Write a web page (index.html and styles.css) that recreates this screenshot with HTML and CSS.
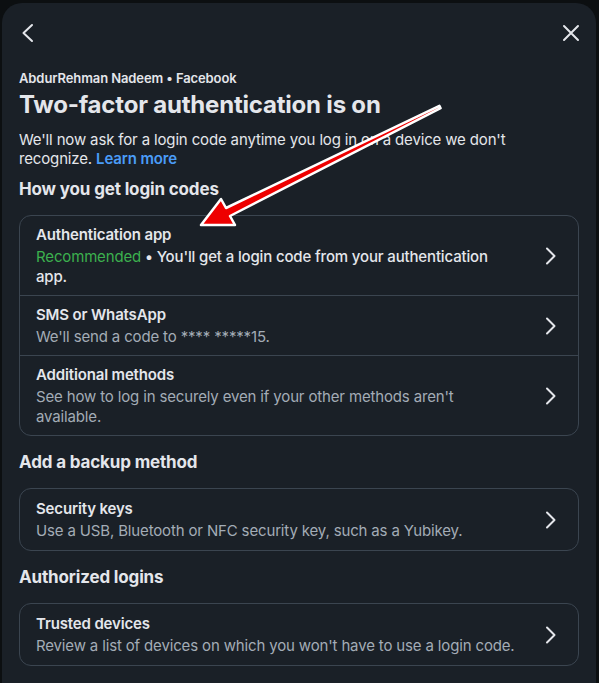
FILE: index.html
```html
<!DOCTYPE html>
<html>
<head>
<meta charset="utf-8">
<link rel="stylesheet" href="styles.css">
</head>
<body>
<div class="dialog">
  <div class="topbar">
    <svg class="icon" width="20" height="20" viewBox="0 0 20 20"><path d="M13 2 L4.5 10 L13 18" fill="none" stroke="#e4e6eb" stroke-width="2" stroke-linecap="round" stroke-linejoin="round"/></svg>
    <svg class="icon" width="20" height="20" viewBox="0 0 20 20"><path d="M3 3 L17 17 M17 3 L3 17" fill="none" stroke="#e4e6eb" stroke-width="2" stroke-linecap="round"/></svg>
  </div>
  <div class="account">AbdurRehman Nadeem • Facebook</div>
  <h1 class="title">Two-factor authentication is on</h1>
  <p class="intro">We'll now ask for a login code anytime you log in on a device we don't recognize. <span class="link">Learn more</span></p>

  <h2 class="section">How you get login codes</h2>
  <div class="card">
    <div class="row">
      <div class="row-text">
        <div class="row-title">Authentication app</div>
        <div class="row-sub strong"><span class="green">Recommended</span> • You'll get a login code from your authentication app.</div>
      </div>
      <svg class="chev" width="12" height="18" viewBox="0 0 12 18"><path d="M2 1.5 L9.5 9 L2 16.5" fill="none" stroke="#e4e6eb" stroke-width="2" stroke-linecap="round" stroke-linejoin="round"/></svg>
    </div>
    <div class="row">
      <div class="row-text">
        <div class="row-title">SMS or WhatsApp</div>
        <div class="row-sub">We'll send a code to **** *****15.</div>
      </div>
      <svg class="chev" width="12" height="18" viewBox="0 0 12 18"><path d="M2 1.5 L9.5 9 L2 16.5" fill="none" stroke="#e4e6eb" stroke-width="2" stroke-linecap="round" stroke-linejoin="round"/></svg>
    </div>
    <div class="row">
      <div class="row-text">
        <div class="row-title">Additional methods</div>
        <div class="row-sub">See how to log in securely even if your other methods aren't available.</div>
      </div>
      <svg class="chev" width="12" height="18" viewBox="0 0 12 18"><path d="M2 1.5 L9.5 9 L2 16.5" fill="none" stroke="#e4e6eb" stroke-width="2" stroke-linecap="round" stroke-linejoin="round"/></svg>
    </div>
  </div>

  <h2 class="section">Add a backup method</h2>
  <div class="card">
    <div class="row">
      <div class="row-text">
        <div class="row-title">Security keys</div>
        <div class="row-sub">Use a USB, Bluetooth or NFC security key, such as a Yubikey.</div>
      </div>
      <svg class="chev" width="12" height="18" viewBox="0 0 12 18"><path d="M2 1.5 L9.5 9 L2 16.5" fill="none" stroke="#e4e6eb" stroke-width="2" stroke-linecap="round" stroke-linejoin="round"/></svg>
    </div>
  </div>

  <h2 class="section">Authorized logins</h2>
  <div class="card">
    <div class="row">
      <div class="row-text">
        <div class="row-title">Trusted devices</div>
        <div class="row-sub">Review a list of devices on which you won't have to use a login code.</div>
      </div>
      <svg class="chev" width="12" height="18" viewBox="0 0 12 18"><path d="M2 1.5 L9.5 9 L2 16.5" fill="none" stroke="#e4e6eb" stroke-width="2" stroke-linecap="round" stroke-linejoin="round"/></svg>
    </div>
  </div>

  <svg class="arrow" width="599" height="300" viewBox="0 0 599 300">
    <polygon points="201,225 235,225 230,216 440.6,108.2 439.4,105.8 226,208 221,199" fill="#ee0000" stroke="#ffffff" stroke-width="2.5" stroke-linejoin="round"/>
  </svg>
</div>
</body>
</html>
```

FILE: styles.css
```css
html, body {
  margin: 0;
  padding: 0;
  height: 100%;
  overflow: hidden;
  background: #0c0f11;
}
body {
  font-family: Inter, "Noto Sans", sans-serif;
  color: #e4e6eb;
}
.dialog {
  position: relative;
  margin: 3px 0 0 2px;
  width: 594px;
  height: 700px;
  box-sizing: border-box;
  background: #1a2027;
  border-radius: 20px;
  padding: 0 17px 0 17px;
}
.topbar {
  display: flex;
  justify-content: space-between;
  padding: 20px 0 0 0;
  height: 28px;
  margin-right: -2px;
}
.topbar .icon { display: block; }
.account {
  margin-top: 19px;
  font-size: 13px;
  font-weight: 600;
  line-height: 16px;
  letter-spacing: -0.1px;
}
.title {
  margin: 4px 0 0 0;
  font-size: 24px;
  font-weight: 700;
  line-height: 30px;
  letter-spacing: -0.2px;
}
.intro {
  margin: 10px 0 0 0;
  font-size: 15px;
  line-height: 19px;
  letter-spacing: -0.15px;
}
.link { color: #4a9cf7; font-weight: 600; }
.section {
  margin: 10px 0 0 0;
  font-size: 17px;
  font-weight: 700;
  line-height: 22px;
  letter-spacing: -0.15px;
}
.card {
  margin-top: 15px;
  border: 1px solid #3b4550;
  border-radius: 12px;
}
.card + .section { margin-top: 15px; }
.row {
  display: flex;
  align-items: center;
  padding: 9px 21px 8px 16px;
  gap: 26px;
}
.row:only-child { padding-top: 10px; padding-bottom: 9px; }
.row + .row { border-top: 1px solid #3b4550; }
.row-text { flex: 1; }
.row-title {
  font-size: 15px;
  font-weight: 600;
  line-height: 20px;
  letter-spacing: -0.15px;
}
.row-sub {
  margin-top: 2px;
  font-size: 15px;
  line-height: 20px;
  color: #a3acb6;
  letter-spacing: -0.15px;
}
.row-sub.strong { color: #e4e6eb; font-weight: 500; }
.green { color: #3cb04e; font-weight: 400; }
.chev { display: block; flex: none; }
.arrow {
  position: absolute;
  left: -2px;
  top: -3px;
  pointer-events: none;
}
```
